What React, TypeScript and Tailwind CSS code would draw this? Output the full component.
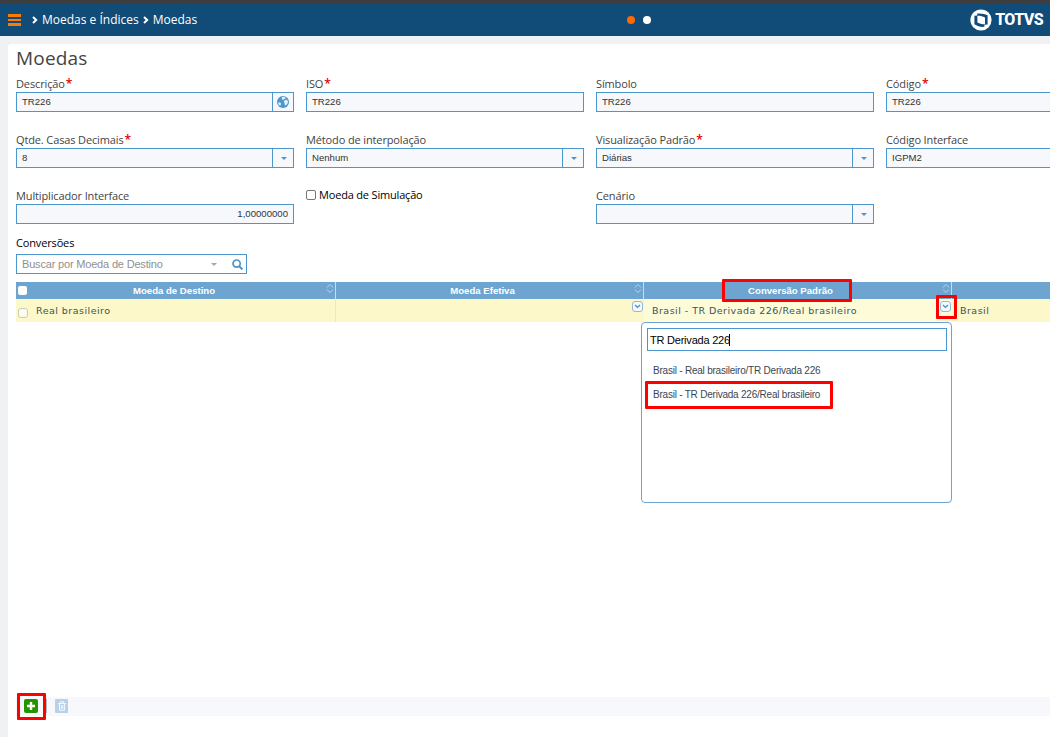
import { useState } from "react";
import type { ReactNode } from "react";
import clsx from "clsx";

const OPTIONS = [
  "Brasil - Real brasileiro/TR Derivada 226",
  "Brasil - TR Derivada 226/Real brasileiro",
];

function Logo() {
  return (
    <div className="flex items-center text-white">
      <svg width="22" height="22" viewBox="0 0 22 22">
        <circle cx="11" cy="11" r="10.6" fill="currentColor" />
        <path
          d="M7.2 4.6c3.4-.6 7 .2 10.4 1.6v9.2l-3.2.4v2c-3.6.4-7.2-.8-10-2.6V6.8l2.8-.4z"
          fill="#114b77"
        />
        <path d="M7.4 6.8c2.6-.2 5 .4 7.6 1.6v6.8c-2.6.2-5-.6-7.6-1.8z" fill="currentColor" />
      </svg>
      <span className="ml-[3px] font-['Roboto'] text-[16px] leading-none font-extrabold tracking-[-0.6px]">TOTVS</span>
    </div>
  );
}

function Header() {
  return (
    <header className="relative flex h-[33px] items-center justify-between bg-[#114b77] pr-[7px] pl-2 text-white">
      <div className="flex items-center">
        <div className="flex w-[13px] flex-col gap-[2px]">
          <span className="h-[3px] bg-[#ff7a00]" />
          <span className="h-[2px] bg-[#ff7a00]" />
          <span className="h-[3px] bg-[#ff7a00]" />
        </div>
        <nav className="ml-[11px] flex items-center text-[12px] leading-4 font-medium">
          <Chevron />
          <span className="mx-[4px]">Moedas e Índices</span>
          <Chevron />
          <span className="ml-[4px]">Moedas</span>
        </nav>
      </div>
      <div className="absolute top-[13px] left-[627px] flex gap-2">
        <span className="size-2 rounded-full bg-[#ff6a00]" />
        <span className="size-2 rounded-full bg-white" />
      </div>
      <Logo />
    </header>
  );
}

function Chevron() {
  return (
    <svg width="6" height="8" viewBox="0 0 6 8">
      <path d="M1 1l3.2 3L1 7" fill="none" stroke="#fff" strokeWidth="2" />
    </svg>
  );
}

function Globe() {
  return (
    <svg width="12" height="12" viewBox="0 0 12 12">
      <circle cx="6" cy="6" r="6" fill="#4b96cc" />
      <path d="M5.6.8l2.2.2 1 1.2L7.2 3 6 4.2 4.6 2.6zM6.8 5l2.8-1.4 1.4 1.6-.4 2.2-1.8 2.2-1-.6-.4-2zM1.2 6.2l2 .4 1 1.2-.6 1.4-.8.6L1.6 8.4z" fill="#e4eff8" />
    </svg>
  );
}

function Caret({ className = "ml-[2px] text-[#4b96cc]" }: { className?: string }) {
  return (
    <svg width="6" height="3" viewBox="0 0 6 3" className={className}>
      <path d="M0 0h6L3 3z" fill="currentColor" />
    </svg>
  );
}

interface FieldProps {
  label: string;
  value?: string;
  required?: boolean;
  addon?: ReactNode;
  alignRight?: boolean;
}

function Field({ label, value = "", required, addon, alignRight }: FieldProps) {
  return (
    <div className="w-[278px]">
      <label className="block h-4 text-[11px] leading-4 tracking-[-0.13px] whitespace-nowrap text-[#444]">
        {label}
        {required && <span className="ml-px text-[12px] leading-none font-semibold text-[#e00000]">*</span>}
      </label>
      <div className="flex h-5 border border-[#4b96cc] bg-[#f7f8fb]">
        <div
          className={clsx(
            "flex-1 px-[5px] font-['Liberation_Sans'] text-[9.6px] leading-[18px] text-[#333]",
            alignRight && "text-right"
          )}
        >
          {value}
        </div>
        {addon && (
          <button className="flex w-[21px] items-center justify-center border-l border-[#4b96cc]">{addon}</button>
        )}
      </div>
    </div>
  );
}

function SortIcon() {
  return (
    <svg width="8" height="9" viewBox="0 0 8 9" className="absolute top-[2px] right-px">
      <path d="M1 3.5l3-3 3 3M1 5.5l3 3 3-3" fill="none" stroke="#b9d5ea" strokeWidth="1" />
    </svg>
  );
}

function ExpandButton() {
  return (
    <span className="absolute top-[2px] right-[1px] flex size-[11px] items-center justify-center rounded-[3px] border border-[#92b9d8] bg-[#f4f9fd]">
      <svg width="7" height="5" viewBox="0 0 7 5">
        <path d="M1 1l2.5 2.4L6 1" fill="none" stroke="#4b8fc4" strokeWidth="1.4" />
      </svg>
    </span>
  );
}

// Red frame drawn over the highlighted element
function Highlight({ className }: { className: string }) {
  return <span className={clsx("pointer-events-none absolute z-20 rounded-[1px] border-[3px] border-[#fe0000]", className)} />;
}

function ConversionPicker() {
  const [term, setTerm] = useState("TR Derivada 226");

  return (
    <div className="absolute top-[23px] -left-[3px] z-10 h-[181px] w-[311px] rounded-[4px] border border-[#6ea5d0] bg-white p-[5px]">
      <div className="relative">
        <input
          value={term}
          onChange={(e) => setTerm(e.target.value)}
          className="block h-[23px] w-[300px] border border-[#4b96cc] px-[2px] font-['Liberation_Sans'] text-[11px] tracking-[-0.22px] text-black outline-none"
        />
        <span className="absolute top-[6px] left-[82px] h-[12px] w-px bg-black" />
      </div>
      <ul className="mt-[7px] font-['Liberation_Sans'] text-[10px] leading-6 tracking-[-0.22px] text-[#3c4650]">
        {OPTIONS.map((option, i) => (
          <li key={option} className="relative h-6 pt-px pl-[6px]">
            {option}
            {i === 1 && <Highlight className="-top-[1px] -left-[2px] h-[28px] w-[188px]" />}
          </li>
        ))}
      </ul>
    </div>
  );
}

function ConversionTable() {
  return (
    <div className="mt-2 grid grid-cols-[320px_308px_308px_98px]">
      {["Moeda de Destino", "Moeda Efetiva", "Conversão Padrão"].map((title, i) => (
        <div
          key={title}
          className={clsx(
            "relative h-[17px] border-r border-[#c9dcec] bg-[#6ea5d0] text-center font-['Liberation_Sans'] text-[9.6px] leading-[17px] font-bold text-white",
            i === 0 ? "pr-[3px]" : "pr-[14px]"
          )}
        >
          {i === 0 && <span className="absolute top-1 left-[2px] size-[9px] rounded-[2px] bg-white" />}
          {title}
          <SortIcon />
          {i === 2 && <Highlight className="-top-[3px] left-[78px] h-[23px] w-[130px]" />}
        </div>
      ))}
      <div className="bg-[#6ea5d0]" />

      <div className="relative h-[23px] border-r border-[#ece6cb] bg-[#fcf8c9] pl-5">
        <span className="absolute top-[9px] left-[2px] size-[10px] rounded-[3px] border border-[#c4ccc4] bg-[#fefcec]" />
        <CellText>Real brasileiro</CellText>
      </div>
      <div className="relative bg-[#fcf8c9]">
        <ExpandButton />
      </div>
      <div className="relative bg-[#fefbd8] pl-2">
        <CellText>Brasil - TR Derivada 226/Real brasileiro</CellText>
        <ExpandButton />
        <ConversionPicker />
        <Highlight className="-top-[4px] -right-[5px] h-[24px] w-[21px]" />
      </div>
      <div className="bg-[#fcf8c9] pl-2">
        <CellText>Brasil</CellText>
      </div>
    </div>
  );
}

function CellText({ children }: { children: ReactNode }) {
  return (
    <span className="block font-['DejaVu_Sans'] text-[9.5px] leading-[23px] tracking-[0.47px] whitespace-nowrap text-[#40525c]">
      {children}
    </span>
  );
}

function Toolbar() {
  return (
    <div className="relative mt-auto mb-[21px] flex h-[19px] items-start bg-[#f7f8fb] pt-[2px] pl-2">
      <button className="relative flex size-[14px] items-center justify-center rounded-[2px] bg-[#249400]">
        <svg width="8" height="8" viewBox="0 0 8 8">
          <path d="M4 0v8M0 4h8" stroke="#fff" strokeWidth="2.4" />
        </svg>
      </button>
      <span className="ml-2 h-[14px] w-px bg-[#b5b5b5]" />
      <button className="ml-2 flex h-[14px] w-[13px] items-center justify-center rounded-[1px] bg-[#b9d1e6]">
        <svg width="8" height="10" viewBox="0 0 8 10" fill="none" stroke="#f1f7fb">
          <path d="M0 2.5h8M2.5 2V.7h3V2M1.5 3v6.3h5V3M3.3 4.2v4M4.8 4.2v4" strokeWidth="1" />
        </svg>
      </button>
      <Highlight className="-top-[4px] left-[1px] h-[27px] w-[29px]" />
    </div>
  );
}

export default function App() {
  return (
    <div className="flex h-[737px] w-[1050px] flex-col overflow-hidden bg-[#f0f1f3] font-['Open_Sans',sans-serif]">
      <div className="h-[3px] shrink-0 bg-[#3d3d3d]" />
      <Header />
      <main className="mt-2 ml-2 flex flex-1 flex-col rounded-tl-[3px] bg-white pl-2">
        <h1 className="h-8 text-[19px] leading-[29px] tracking-[0.2px] text-[#444]">Moedas</h1>

        <div className="grid grid-cols-[repeat(4,278px)] gap-x-3 gap-y-5">
          <Field label="Descrição" value="TR226" required addon={<Globe />} />
          <Field label="ISO" value="TR226" required />
          <Field label="Símbolo" value="TR226" />
          <Field label="Código" value="TR226" required />

          <Field label="Qtde. Casas Decimais" value="8" required addon={<Caret />} />
          <Field label="Método de interpolação" value="Nenhum" addon={<Caret />} />
          <Field label="Visualização Padrão" value="Diárias" required addon={<Caret />} />
          <Field label="Código Interface" value="IGPM2" />

          <Field label="Multiplicador Interface" value="1,00000000" alignRight />
          <label className="flex h-[14px] items-center text-[11px] tracking-[-0.18px] text-black">
            <span className="mr-[3px] size-[10px] rounded-[2px] border border-[#767676] bg-white" />
            Moeda de Simulação
          </label>
          <Field label="Cenário" addon={<Caret />} />
        </div>

        <h2 className="mt-[11px] h-[19px] text-[11px] leading-4 tracking-[-0.15px] text-black">Conversões</h2>
        <div className="flex h-5 w-[231px] items-center border border-[#4b96cc] bg-white pr-[3px] pl-[5px] font-['Liberation_Sans'] text-[11px] tracking-[-0.18px] text-[#909090]">
          <span className="flex-1">Buscar por Moeda de Destino</span>
          <Caret className="mr-[15px] text-[#8fafc6]" />
          <svg width="11" height="11" viewBox="0 0 11 11" fill="none" stroke="#4b96cc">
            <circle cx="4.6" cy="4.6" r="3.6" strokeWidth="1.7" />
            <path d="M7.2 7.2l3.2 3.2" strokeWidth="2" />
          </svg>
        </div>

        <ConversionTable />
        <Toolbar />
      </main>
    </div>
  );
}
